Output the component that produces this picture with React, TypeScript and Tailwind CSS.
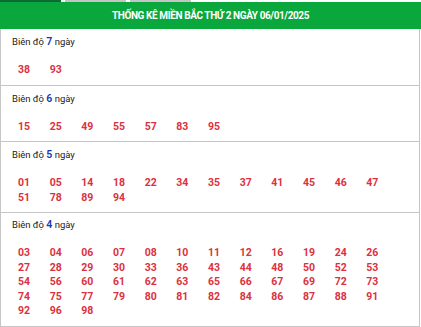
const groups = [
  { days: 7, nums: ["38", "93"] },
  { days: 6, nums: ["15", "25", "49", "55", "57", "83", "95"] },
  {
    days: 5,
    nums: ["01", "05", "14", "18", "22", "34", "35", "37", "41", "45", "46", "47", "51", "78", "89", "94"],
  },
  {
    days: 4,
    nums: [
      "03", "04", "06", "07", "08", "10", "11", "12", "16", "19", "24", "26",
      "27", "28", "29", "30", "33", "36", "43", "44", "48", "50", "52", "53",
      "54", "56", "60", "61", "62", "63", "65", "66", "67", "69", "72", "73",
      "74", "75", "77", "79", "80", "81", "82", "84", "86", "87", "88", "91",
      "92", "96", "98",
    ],
  },
]

export default function App() {
  return (
    <div className="w-[421px] h-[327px] bg-white font-['Roboto',sans-serif] overflow-hidden">
      {/* tab strip */}
      <div className="flex h-[2px] gap-[4px]">
        <div className="w-[61px] bg-[#0b6b35]" />
        <div className="w-[61px] bg-[#c4c4c4]" />
        <div className="w-[61px] bg-[#c4c4c4]" />
      </div>

      {/* header */}
      <div className="h-[27px] bg-[#0aa83c] flex items-center justify-center text-white font-bold text-[10px] tracking-[-0.4px]">
        THỐNG KÊ MIỀN BẮC THỨ 2 NGÀY 06/01/2025
      </div>

      <div className="w-[420px] border-x border-b border-[#c6c6c6]">
        {groups.map((g, i) => (
          <div
            key={g.days}
            className={
              i < groups.length - 1
                ? "pt-[6px] pb-[7px] border-b border-[#c6c6c6]"
                : "pt-[5px] pb-[7px]"
            }
          >
            <div className="pl-[11px] h-[14px] leading-[14px] text-[9.5px] text-[#222]">
              Biên độ <span className="text-[#1239b0] font-semibold text-[10.5px]">{g.days}</span> ngày
            </div>
            <div className="mt-[14px] ml-[17px] w-[380px] grid grid-cols-12">
              {g.nums.map((n) => (
                <span key={n} className="h-[14.5px] leading-[14.5px] text-[10.5px] font-bold text-[#dc3140]">
                  {n}
                </span>
              ))}
            </div>
          </div>
        ))}
      </div>
    </div>
  )
}
